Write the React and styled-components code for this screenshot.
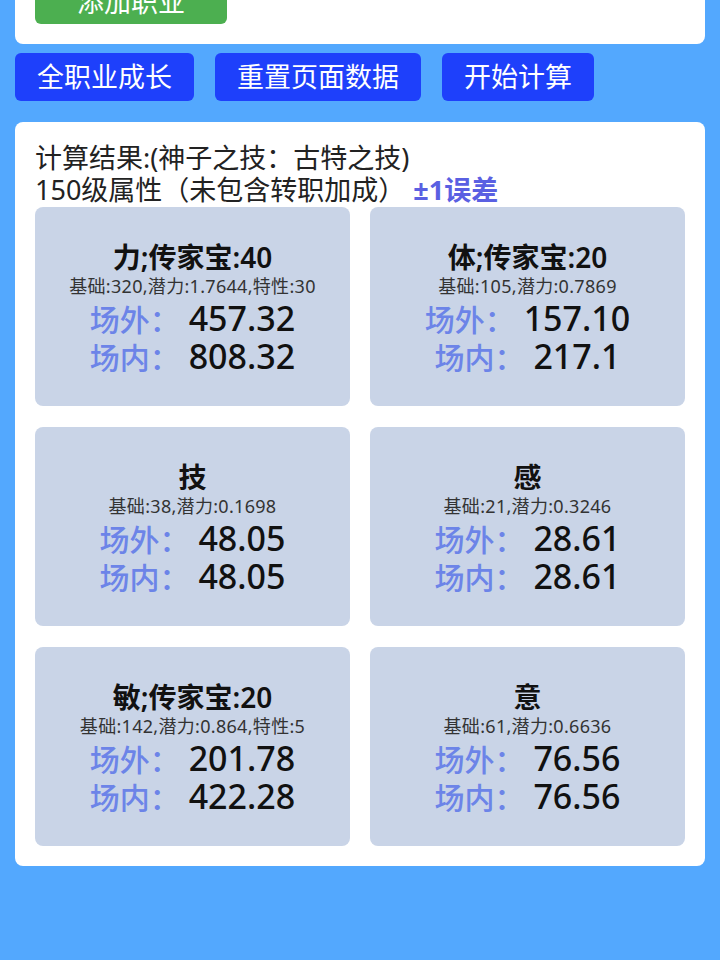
import React from 'react';
import styled, { createGlobalStyle } from 'styled-components';

const GlobalStyle = createGlobalStyle`
	html, body {
		margin: 0;
		padding: 0;
		background: #53a8fe;
	}
	body {
		font-family: "Noto Sans", "Noto Sans CJK SC", sans-serif;
		overflow: hidden;
	}
`;

const stats = [
	{ title: '力;传家宝:40', base: '基础:320,潜力:1.7644,特性:30', out: '457.32', inn: '808.32' },
	{ title: '体;传家宝:20', base: '基础:105,潜力:0.7869', out: '157.10', inn: '217.1' },
	{ title: '技', base: '基础:38,潜力:0.1698', out: '48.05', inn: '48.05' },
	{ title: '感', base: '基础:21,潜力:0.3246', out: '28.61', inn: '28.61' },
	{ title: '敏;传家宝:20', base: '基础:142,潜力:0.864,特性:5', out: '201.78', inn: '422.28' },
	{ title: '意', base: '基础:61,潜力:0.6636', out: '76.56', inn: '76.56' },
];

const App = () => {
	return (
		<S_PAGE>
			<GlobalStyle />
			<S_TOP_CARD>
				<S_GREEN_BUTTON>添加职业</S_GREEN_BUTTON>
			</S_TOP_CARD>

			<S_TOOLBAR>
				<S_BLUE_BUTTON>全职业成长</S_BLUE_BUTTON>
				<S_BLUE_BUTTON>重置页面数据</S_BLUE_BUTTON>
				<S_BLUE_BUTTON>开始计算</S_BLUE_BUTTON>
			</S_TOOLBAR>

			<S_RESULT>
				<S_HEAD>计算结果:(神子之技：古特之技)</S_HEAD>
				<S_HEAD>
					150级属性（未包含转职加成）<S_ERROR>±1误差</S_ERROR>
				</S_HEAD>
				<S_GRID>
					{stats.map((s) => (
						<S_STAT key={s.title}>
							<S_STAT_TITLE>{s.title}</S_STAT_TITLE>
							<S_STAT_BASE>{s.base}</S_STAT_BASE>
							<S_VALUE_ROW>
								<S_LABEL>场外：</S_LABEL> {s.out}
							</S_VALUE_ROW>
							<S_VALUE_ROW>
								<S_LABEL>场内：</S_LABEL> {s.inn}
							</S_VALUE_ROW>
						</S_STAT>
					))}
				</S_GRID>
			</S_RESULT>
		</S_PAGE>
	);
};

const S_PAGE = styled.div`
	padding: 0 15px;
	height: 960px;
	box-sizing: border-box;
`;

const S_TOP_CARD = styled.div`
	margin-top: -40px;
	background: #fff;
	border-radius: 0 0 8px 8px;
	padding: 20px;
`;

const S_GREEN_BUTTON = styled.div`
	width: 192px;
	height: 44px;
	line-height: 44px;
	background: #4caf50;
	color: #fff;
	border-radius: 6px;
	font-size: 27px;
	text-align: center;
`;

const S_TOOLBAR = styled.div`
	display: flex;
	gap: 21px;
	margin-top: 9px;
`;

const S_BLUE_BUTTON = styled.div`
	height: 48px;
	line-height: 48px;
	padding: 0 22px;
	background: #1e40fb;
	color: #fff;
	border-radius: 6px;
	font-size: 27px;
`;

const S_RESULT = styled.div`
	margin-top: 21px;
	background: #fff;
	border-radius: 8px;
	padding: 20px;
`;

const S_HEAD = styled.div`
	font-size: 27px;
	line-height: 32px;
	color: #222;
	white-space: nowrap;
`;

const S_ERROR = styled.span`
	color: #5a60e2;
	font-weight: 700;
	margin-left: 8px;
`;

const S_GRID = styled.div`
	display: grid;
	grid-template-columns: 1fr 1fr;
	gap: 21px 20px;
	margin-top: 1px;
`;

const S_STAT = styled.div`
	height: 199px;
	background: #c9d4e7;
	border-radius: 8px;
	display: flex;
	flex-direction: column;
	justify-content: center;
	align-items: center;
	text-align: center;
	color: #111;
	padding-top: 4px;
	box-sizing: border-box;
`;

const S_STAT_TITLE = styled.div`
	font-size: 28px;
	line-height: 30px;
	font-weight: 600;
`;

const S_STAT_BASE = styled.div`
	font-size: 18px;
	line-height: 28px;
	color: #333;
	letter-spacing: 0.3px;
`;

const S_VALUE_ROW = styled.div`
	font-size: 34px;
	line-height: 37px;
	font-weight: 500;
	white-space: pre;
`;

const S_LABEL = styled.span`
	color: #6c84e8;
	font-size: 30px;
	font-weight: 500;
`;

export default App;
